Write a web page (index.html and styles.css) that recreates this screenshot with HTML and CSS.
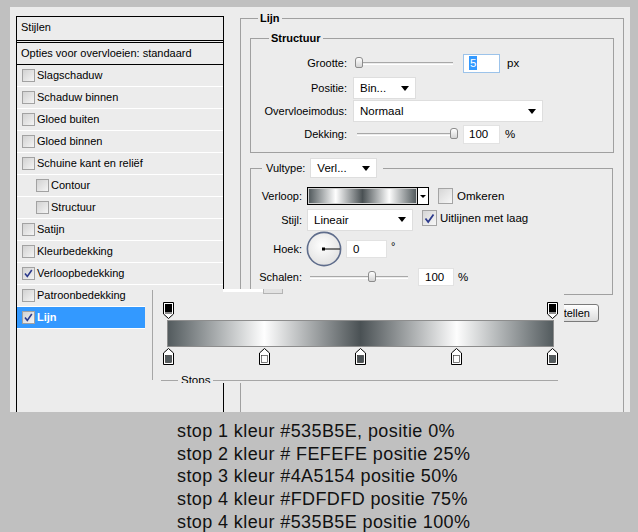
FILE: index.html
```html
<!DOCTYPE html>
<html>
<head>
<meta charset="utf-8">
<title>Laagstijl - Lijn</title>
<link rel="stylesheet" href="styles.css">
</head>
<body>

<div class="dialoog">

	<div class="stijlen">
		<div class="kop">Stijlen</div>
		<div class="opties">Opties voor overvloeien: standaard</div>
		<div class="item"><span class="vinkje"></span>Slagschaduw</div>
		<div class="item"><span class="vinkje"></span>Schaduw binnen</div>
		<div class="item"><span class="vinkje"></span>Gloed buiten</div>
		<div class="item"><span class="vinkje"></span>Gloed binnen</div>
		<div class="item"><span class="vinkje"></span>Schuine kant en reliëf</div>
		<div class="item sub"><span class="vinkje"></span>Contour</div>
		<div class="item sub"><span class="vinkje"></span>Structuur</div>
		<div class="item"><span class="vinkje"></span>Satijn</div>
		<div class="item"><span class="vinkje"></span>Kleurbedekking</div>
		<div class="item"><span class="vinkje"><svg width="11" height="11" viewBox="0 0 11 11"><path d="M2 5.5L4.3 8.5L8.8 2" fill="none" stroke="#2c3a8c" stroke-width="1.6"/></svg></span>Verloopbedekking</div>
		<div class="item"><span class="vinkje"></span>Patroonbedekking</div>
		<div class="item actief"><span class="vinkje"><svg width="11" height="11" viewBox="0 0 11 11"><path d="M2 5.5L4.3 8.5L8.8 2" fill="none" stroke="#2c3a8c" stroke-width="1.6"/></svg></span>Lijn</div>
	</div>

	<div class="rechts">
		<fieldset class="lijn">
			<legend>Lijn</legend>

			<fieldset class="structuur">
				<legend>Structuur</legend>
				<div class="rij r1">
					<label>Grootte:</label>
					<div class="schuif" style="width: 96px;"><span class="knop" style="left: -2px;"></span></div>
					<span class="veld focus"><span class="selectie">5</span></span>
					<span class="eenheid">px</span>
				</div>
				<div class="rij r2">
					<label>Positie:</label>
					<div class="keuze" style="width: 63px;">Bin...<span class="pijl"></span></div>
				</div>
				<div class="rij r3">
					<label>Overvloeimodus:</label>
					<div class="keuze" style="width: 190px;">Normaal<span class="pijl"></span></div>
				</div>
				<div class="rij r4">
					<label>Dekking:</label>
					<div class="schuif" style="width: 96px;"><span class="knop" style="left: 93px;"></span></div>
					<span class="veld">100</span>
					<span class="eenheid procent">%</span>
				</div>
			</fieldset>

			<fieldset class="vulling">
				<legend><div class="legenda">
					<span class="vultype">Vultype:</span>
					<div class="keuze klein" style="width: 67px;">Verl...<span class="pijl"></span></div>
				</div></legend>
				<div class="rij v1">
					<label>Verloop:</label>
					<div class="verloop-kies">
						<div class="staal"></div>
						<div class="mini"><span class="pijltje"></span></div>
					</div>
					<span class="vak omkeren"></span>
					<span class="vaklabel">Omkeren</span>
				</div>
				<div class="rij v2">
					<label>Stijl:</label>
					<div class="keuze" style="width: 106px;">Lineair<span class="pijl"></span></div>
					<span class="vak uitlijnen"><svg width="13" height="13" viewBox="0 0 13 13"><path d="M2.5 6.5L5.2 10L10.5 2.5" fill="none" stroke="#2c3a8c" stroke-width="1.8"/></svg></span>
					<span class="vaklabel">Uitlijnen met laag</span>
				</div>
				<div class="rij v3">
					<label>Hoek:</label>
					<svg class="hoek" width="36" height="36" viewBox="0 0 36 36">
						<defs>
							<radialGradient id="schijf" cx="45%" cy="40%" r="60%">
								<stop offset="0" stop-color="#ffffff"/>
								<stop offset="1" stop-color="#e2e2e2"/>
							</radialGradient>
						</defs>
						<circle cx="18" cy="18" r="16.6" fill="url(#schijf)" stroke="#5f6d8c" stroke-width="1.6"/>
						<line x1="18" y1="18" x2="34" y2="18" stroke="#000" stroke-width="1"/>
						<rect x="16" y="16.5" width="3" height="3" fill="#000"/>
					</svg>
					<span class="veld hoekveld">0</span>
					<span class="graden">°</span>
				</div>
				<div class="rij v4">
					<label>Schalen:</label>
					<div class="schuif schalen" style="width: 98px;"><span class="knop" style="left: 58px;"></span></div>
					<span class="veld schaalveld">100</span>
					<span class="eenheid">%</span>
				</div>
			</fieldset>

			<div class="std-knop">Standaard instellen</div>
		</fieldset>
	</div>

	<div class="bewerker">
		<div class="rest"><span class="wit"></span><span class="grijs"></span></div>
		<div class="kader">
			<div class="stops boven">
				<span class="stop" style="left: 0%;"><svg width="11" height="17" viewBox="0 0 11 17"><path d="M0.5 0.5H10.5V12L5.5 16.5L0.5 12Z" fill="#fff" stroke="#000"/><rect x="2" y="2" width="7" height="8" fill="#000"/><rect x="2" y="10" width="7" height="2" fill="#8e8e8e"/></svg></span>
				<span class="stop" style="left: 100%;"><svg width="11" height="17" viewBox="0 0 11 17"><path d="M0.5 0.5H10.5V12L5.5 16.5L0.5 12Z" fill="#fff" stroke="#000"/><rect x="2" y="2" width="7" height="8" fill="#000"/><rect x="2" y="10" width="7" height="2" fill="#8e8e8e"/></svg></span>
			</div>
			<div class="balk"></div>
			<div class="stops onder">
				<span class="stop" style="left: 0%;"><svg width="11" height="17" viewBox="0 0 11 17"><path d="M5.5 0.5L10.5 5V16.5H0.5V5Z" fill="#fff" stroke="#000"/><rect x="2.5" y="7.5" width="6" height="7" fill="#535B5E" stroke="#222" stroke-width="0.6"/></svg></span>
				<span class="stop" style="left: 25%;"><svg width="11" height="17" viewBox="0 0 11 17"><path d="M5.5 0.5L10.5 5V16.5H0.5V5Z" fill="#fff" stroke="#000"/><rect x="2.5" y="7.5" width="6" height="7" fill="#FEFEFE" stroke="#222" stroke-width="0.6"/></svg></span>
				<span class="stop" style="left: 50%;"><svg width="11" height="17" viewBox="0 0 11 17"><path d="M5.5 0.5L10.5 5V16.5H0.5V5Z" fill="#fff" stroke="#000"/><rect x="2.5" y="7.5" width="6" height="7" fill="#4A5154" stroke="#222" stroke-width="0.6"/></svg></span>
				<span class="stop" style="left: 75%;"><svg width="11" height="17" viewBox="0 0 11 17"><path d="M5.5 0.5L10.5 5V16.5H0.5V5Z" fill="#fff" stroke="#000"/><rect x="2.5" y="7.5" width="6" height="7" fill="#FDFDFD" stroke="#222" stroke-width="0.6"/></svg></span>
				<span class="stop" style="left: 100%;"><svg width="11" height="17" viewBox="0 0 11 17"><path d="M5.5 0.5L10.5 5V16.5H0.5V5Z" fill="#fff" stroke="#000"/><rect x="2.5" y="7.5" width="6" height="7" fill="#535B5E" stroke="#222" stroke-width="0.6"/></svg></span>
			</div>
		</div>
		<fieldset class="stopsgroep">
			<legend>Stops</legend>
		</fieldset>
	</div>

</div>

<div class="uitleg">
	stop 1 kleur #535B5E, positie 0%<br>
	stop 2 kleur # FEFEFE positie 25%<br>
	stop 3 kleur #4A5154 positie 50%<br>
	stop 4 kleur #FDFDFD positie 75%<br>
	stop 4 kleur #535B5E positie 100%
</div>

</body>
</html>
```

FILE: styles.css
```css
html {
    overflow: hidden;
}
body {
    margin: 0;
    background: #c0c0c0;
    font-family: "Liberation Sans", Arial, sans-serif;
    font-size: 11px;
    color: #000;
}
.dialoog {
    position: relative;
    display: flex;
    align-items: flex-start;
    box-sizing: border-box;
    width: 620px;
    height: 405px;
    margin: 7px 0 0 10px;
    padding: 9px 0 0 6px;
    background: #ececec;
    overflow: hidden;
}

/* lijst met stijlen */
.stijlen {
    flex: none;
    width: 206px;
    height: 420px;
    border: 1px solid #000;
}
.kop {
    height: 23px;
    line-height: 21px;
    padding-left: 4px;
    border-bottom: 1px solid #000;
}
.opties {
    height: 21px;
    line-height: 21px;
    margin-top: 1px;
    padding-left: 4px;
    border-top: 1px solid #000;
    border-bottom: 1px solid #000;
}
.item {
    display: flex;
    align-items: center;
    height: 21px;
    padding-left: 5px;
    padding-bottom: 1px;
    box-sizing: border-box;
    border-bottom: 1px solid #fff;
    height: 22px;
}
.item.sub {
    padding-left: 19px;
}
.item.actief {
    background: #3399ff;
    color: #fff;
    font-weight: bold;
}
.vinkje {
    display: flex;
    align-items: center;
    justify-content: center;
    box-sizing: border-box;
    width: 13px;
    height: 13px;
    margin-right: 2px;
    border: 1px solid #a2a2a2;
    background: linear-gradient(135deg, #d2d2d2, #f4f4f4);
}

/* rechterkant */
.rechts {
    flex: none;
    width: 384px;
    margin-left: 16px;
}
fieldset {
    min-width: 0;
    margin: 0;
    border: 1px solid #a0a0a0;
}
legend {
    line-height: 13px;
    padding: 0 2px;
    font-weight: bold;
}
.lijn {
    box-sizing: border-box;
    width: 384px;
    height: 420px;
    margin-top: -4px;
    padding: 7px 9px 0 9px;
}
.lijn > legend {
    margin-left: 8px;
}
.structuur {
    box-sizing: border-box;
    width: 364px;
    padding: 8px 0 8px 0;
}
.structuur > legend {
    margin-left: 18px;
}
.rij {
    display: flex;
    align-items: center;
}
.rij label {
    flex: none;
    width: 96px;
    margin-right: 6px;
    text-align: right;
}
.r1 { height: 20px; }
.r2 { height: 22px; margin-top: 4px; }
.r3 { height: 22px; margin-top: 1px; }
.r4 { height: 20px; margin-top: 2px; }

.schuif {
    position: relative;
    flex: none;
    height: 1px;
    margin-left: 4px;
    border-top: 1px solid #a8a8a8;
    border-bottom: 1px solid #fff;
}
.knop {
    position: absolute;
    top: -6px;
    box-sizing: border-box;
    width: 8px;
    height: 11px;
    border: 1px solid #8c8c8c;
    border-radius: 3px 3px 2px 2px;
    background: linear-gradient(#ffffff, #d4d4d4);
}
.veld {
    flex: none;
    box-sizing: border-box;
    width: 37px;
    height: 19px;
    margin-left: 10px;
    padding-left: 5px;
    border: 1px solid #e2e2e2;
    background: #fff;
    font-size: 11.5px;
    line-height: 17px;
}
.veld.focus {
    border-color: #9cc3ea;
}
.selectie {
    display: inline-block;
    padding: 0 1px;
    background: #3399ff;
    color: #fff;
    line-height: 14px;
}
.eenheid {
    margin-left: 7px;
    font-size: 11.5px;
}
.eenheid.procent {
    margin-left: 5px;
}
.keuze {
    display: flex;
    align-items: center;
    justify-content: space-between;
    flex: none;
    box-sizing: border-box;
    height: 22px;
    padding: 0 6px;
    border: 1px solid #dedede;
    background: #fff;
    font-size: 11.5px;
    font-weight: normal;
}
.keuze.klein {
    height: 20px;
}
.pijl {
    width: 0;
    height: 0;
    border-left: 4px solid transparent;
    border-right: 4px solid transparent;
    border-top: 5px solid #000;
}

/* vulling */
.vulling {
    box-sizing: border-box;
    width: 363px;
    margin-top: 5px;
    padding: 8px 0 7px 0;
}
.vulling > legend {
    margin-left: 11px;
    padding: 0 6px 0 4px;
}
.legenda {
    display: flex;
    align-items: center;
    height: 20px;
    font-weight: normal;
}
.vultype {
    margin-right: 5px;
}
.vulling .rij label {
    width: 51px;
    margin-right: 5px;
}
.v1 { height: 20px; }
.v2 { height: 21px; margin-top: 3px; }
.v3 { height: 35px; margin-top: 1px; }
.v4 { height: 20px; margin-top: 1px; }

.verloop-kies {
    display: flex;
    flex: none;
    width: 122px;
    height: 18px;
    box-sizing: border-box;
    border: 1px solid #000;
}
.staal {
    flex: 1;
    border: 1px solid #d0d0d0;
    background: linear-gradient(to right, #535B5E 0%, #FEFEFE 25%, #4A5154 50%, #FDFDFD 75%, #535B5E 100%);
}
.mini {
    display: flex;
    align-items: center;
    justify-content: center;
    width: 10px;
    border-left: 1px solid #000;
    background: #fff;
}
.pijltje {
    width: 0;
    height: 0;
    border-left: 3px solid transparent;
    border-right: 3px solid transparent;
    border-top: 3px solid #000;
}
.vak {
    display: flex;
    align-items: center;
    justify-content: center;
    flex: none;
    box-sizing: border-box;
    width: 15px;
    height: 16px;
    border: 1px solid #a4a4a4;
    background: linear-gradient(135deg, #d6d6d6, #f7f7f7);
}
.omkeren {
    margin-left: 9px;
}
.uitlijnen {
    margin-left: 9px;
    margin-top: -3px;
}
.vaklabel {
    margin-left: 4px;
    font-size: 11.5px;
}
.v1 .vaklabel {
    margin-top: -1px;
}
.v2 .vaklabel {
    margin-left: 3px;
    margin-top: -4px;
}
.hoek {
    flex: none;
    margin-left: -1px;
}
.hoekveld {
    width: 41px;
    height: 18px;
    margin-left: 4px;
    padding-left: 6px;
}
.graden {
    align-self: flex-start;
    margin: 9px 0 0 4px;
}
.schuif.schalen {
    margin-left: 3px;
}
.schaalveld {
    width: 36px;
    height: 18px;
    padding-left: 6px;
}
.v4 .eenheid {
    margin-left: 4px;
}

.std-knop {
    width: fit-content;
    margin: 9px 15px 0 auto;
    padding: 0 8px;
    height: 16px;
    line-height: 16px;
    border: 1px solid #7a7a7a;
    border-radius: 3px;
    background: linear-gradient(#ffffff, #dcdcdc);
}

/* verloopbewerker */
.bewerker {
    position: absolute;
    left: 135px;
    top: 282px;
    width: 419px;
    height: 94px;
    background: #ececec;
    overflow: hidden;
}
.rest {
    position: absolute;
    left: 78px;
    top: 0;
    display: flex;
}
.rest .wit {
    width: 40px;
    height: 3px;
    background: #fff;
}
.rest .grijs {
    box-sizing: border-box;
    width: 20px;
    height: 5px;
    border: 1px solid #b4b4b4;
    border-top: 0;
    background: #e2e2e2;
}
.kader {
    box-sizing: border-box;
    height: 90px;
    margin: 1px 0 0 7px;
    padding: 12px 0 0 14px;
    border-left: 1px solid #a6a6a6;
}
.stops {
    position: relative;
    width: 384px;
    height: 17px;
    margin-left: 1px;
}
.stop {
    position: absolute;
    top: 0;
    margin-left: -5px;
    height: 17px;
}
.balk {
    width: 387px;
    height: 27px;
    box-sizing: border-box;
    margin-top: 1px;
    border: 1px solid #8d8d8d;
    background: linear-gradient(to right, #535B5E 0%, #FEFEFE 25%, #4A5154 50%, #FDFDFD 75%, #535B5E 100%);
}
.stops.onder {
    margin-top: 1px;
}
.stopsgroep {
    width: 397px;
    margin: -6px 0 0 16px;
    padding: 0;
    border: 0;
    border-top: 1px solid #a6a6a6;
}
.stopsgroep > legend {
    margin-left: 17px;
    padding: 0 3px;
    font-weight: normal;
    font-size: 11.5px;
}

/* uitleg onder */
.uitleg {
    padding: 8px 0 0 177px;
    font-size: 18px;
    line-height: 22.7px;
    letter-spacing: 0.4px;
    color: #111;
}
```
